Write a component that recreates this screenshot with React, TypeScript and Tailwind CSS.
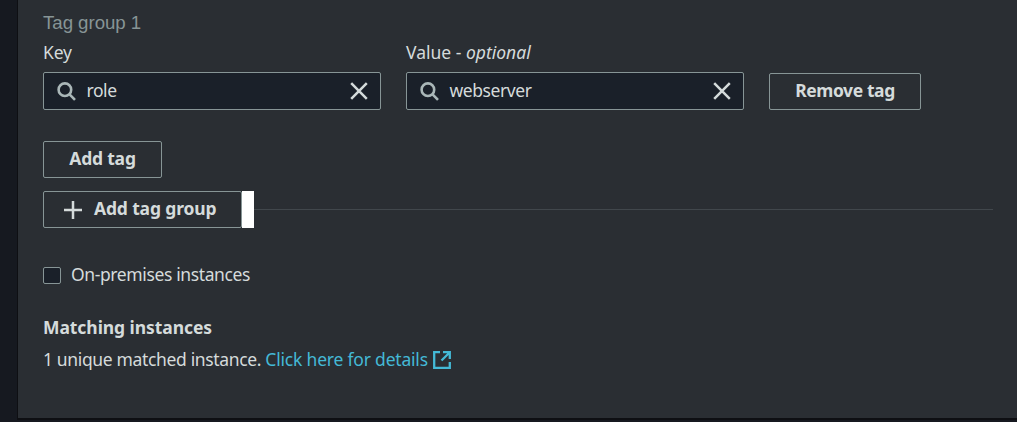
import type { ReactNode } from "react";

function SearchIcon() {
  return (
    <svg className="h-[19px] w-[19px] shrink-0" viewBox="0 0 19 19" fill="none" stroke="#aab7b8" strokeWidth="2.6">
      <circle cx="7.9" cy="7.7" r="6.3" />
      <path d="M12.3 12.1 18 17.8" />
    </svg>
  );
}

function CloseIcon() {
  return (
    <svg className="h-[18px] w-[18px] shrink-0" viewBox="0 0 18 18" fill="none" stroke="#d5dbdb" strokeWidth="2.5">
      <path d="M1.2 1.2 16.8 16.8M16.8 1.2 1.2 16.8" />
    </svg>
  );
}

function SearchField({ value }: { value: string }) {
  return (
    <div className="flex h-[38px] w-[338px] items-center rounded-[2px] border border-[#879596] bg-[#1a2029] pr-3 pl-[13px]">
      <SearchIcon />
      <span className="ml-[10.5px] flex-1 pb-[2px] leading-[22px] tracking-[-0.43px]">{value}</span>
      <CloseIcon />
    </div>
  );
}

function Button({ children, className }: { children: ReactNode; className: string }) {
  return (
    <button
      type="button"
      className={`flex h-[37px] items-center rounded-[2px] border border-[#879596] font-bold whitespace-nowrap ${className}`}
    >
      {children}
    </button>
  );
}

export default function App() {
  return (
    <div className="h-[422px] w-[1017px] overflow-hidden bg-[#161920] pl-[17px] font-['Noto_Sans','Open_Sans',sans-serif] text-[17.5px] text-[#d5dbdb]">
      <main className="flex h-[420px] flex-col items-start border-b-2 border-l border-[#0e0f13] bg-[#2a2e33] pr-6 pl-[25px]">
        <div className="mt-[12px] h-[22px] font-['Liberation_Sans',sans-serif] text-[18.7px] leading-[22px] tracking-[-0.05px] text-[#879596]">
          Tag group 1
        </div>
        <div className="mt-[7px] flex items-end gap-[25px]">
          <label className="flex flex-col">
            <span className="mb-[9px] h-[22px] leading-[22px] tracking-[-0.2px]">Key</span>
            <SearchField value="role" />
          </label>
          <label className="flex flex-col">
            <span className="mb-[9px] h-[22px] leading-[22px]">
              Value - <i>optional</i>
            </span>
            <SearchField value="webserver" />
          </label>
          <Button className="w-[152px] justify-center pb-[2px] tracking-[-0.4px]">Remove tag</Button>
        </div>
        <Button className="mt-[31px] w-[119px] shrink-0 justify-center pb-[2px] tracking-[-0.2px]">Add tag</Button>
        <div className="mt-[13px] flex w-[950px] shrink-0 items-center">
          <Button className="w-[199px] shrink-0 pl-5 tracking-[-0.15px]">
            <svg className="mr-3 h-[18px] w-[18px]" viewBox="0 0 18 18" stroke="#d5dbdb" strokeWidth="2.5">
              <path d="M9 0V18M0 9H18" />
            </svg>
            <span className="pb-[2px]">Add tag group</span>
          </Button>
          <div className="h-[37px] w-3 bg-white" />
          <div className="h-px flex-1 bg-[#41474c]" />
        </div>
        <label className="mt-[35px] flex h-[22px] shrink-0 items-center">
          <span className="mt-[3px] h-[17px] w-[18px] rounded-[2px] border border-[#879596] bg-[#1a2029]" />
          <span className="ml-[10px] leading-[22px] tracking-[-0.38px]">On-premises instances</span>
        </label>
        <h2 className="mt-[31px] h-[22px] leading-[22px] font-bold tracking-[-0.07px]">Matching instances</h2>
        <p className="mt-[10px] flex h-[22px] items-center leading-[22px] whitespace-pre">
          <span className="tracking-[-0.35px]">1 unique matched instance. </span>
          <a href="#" className="flex items-center text-[#44b9d6]">
            <span className="tracking-[-0.2px]">Click here for details</span>
            <svg className="mt-[2px] ml-[5px] h-[18px] w-[18px]" viewBox="0 0 18 18" fill="none" stroke="#44b9d6" strokeWidth="2.3">
              <path d="M7 1.2H1.2V16.8H16.8V11M10 1.2H16.8V8M16.8 1.2 8.5 9.5" />
            </svg>
          </a>
        </p>
      </main>
    </div>
  );
}
